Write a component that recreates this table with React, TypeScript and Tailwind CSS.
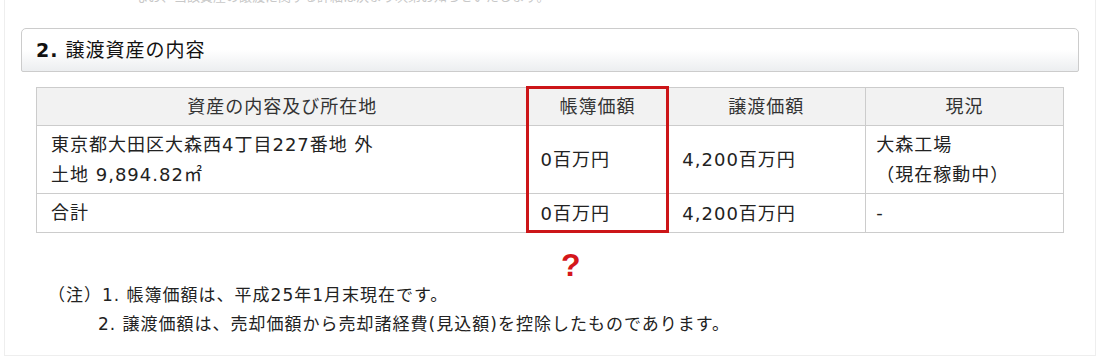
import React from 'react';

const font = { fontFamily: '"DejaVu Sans", "Noto Sans CJK JP", sans-serif' };

const rows = [
  {
    asset: ['東京都大田区大森西4丁目227番地 外', '土地 9,894.82㎡'],
    book: '0百万円',
    transfer: '4,200百万円',
    status: ['大森工場', '（現在稼動中）'],
    h: 'h-[68px]',
  },
  {
    asset: ['合計'],
    book: '0百万円',
    transfer: '4,200百万円',
    status: ['-'],
    h: 'h-[39px]',
  },
];

export default function App() {
  return (
    <div className="w-[1100px] h-[359px] bg-white overflow-hidden text-[#222]" style={font}>
      <div className="ml-[4px] w-[1092px] h-[356px] border-l border-r border-b border-[#eeeeee]">
        <div className="h-[28px] overflow-hidden">
          <div className="-mt-[10px] pl-[130px] text-[13px] leading-[14px] text-[#c8c8c8] whitespace-nowrap">
            なお、当該資産の譲渡に関する詳細は決まり次第お知らせいたします。
          </div>
        </div>

        <div className="ml-[16px] w-[1058px] h-[44px] border border-[#cccccc] rounded-t-[5px] rounded-b-[2px] bg-gradient-to-b from-white from-50% to-[#eceef0] flex items-center pl-[14px]">
          <span className="text-[19px] tracking-[1px] text-[#111]">
            <span className="font-bold">2.</span> 譲渡資産の内容
          </span>
        </div>

        <div className="relative ml-[31px] w-[1028px] mt-[15px]">
          <table className="w-full border-collapse text-[18px] tracking-[1px]">
            <colgroup>
              <col className="w-[492px]" />
              <col className="w-[139px]" />
              <col className="w-[199px]" />
              <col className="w-[198px]" />
            </colgroup>
            <thead>
              <tr className="h-[38px] bg-[#f2f2f2] text-[#333]">
                <th className="border border-[#cccccc] font-normal">資産の内容及び所在地</th>
                <th className="border border-[#cccccc] font-normal">帳簿価額</th>
                <th className="border border-[#cccccc] font-normal">譲渡価額</th>
                <th className="border border-[#cccccc] font-normal">現況</th>
              </tr>
            </thead>
            <tbody>
              {rows.map((r, i) => (
                <tr key={i} className={r.h}>
                  <td className="border border-[#cccccc] pl-[14px] leading-[30px]">
                    {r.asset.map((l) => (
                      <div key={l}>{l}</div>
                    ))}
                  </td>
                  <td className="border border-[#cccccc] pl-[12px]">{r.book}</td>
                  <td className="border border-[#cccccc] pl-[15px]">{r.transfer}</td>
                  <td className="border border-[#cccccc] pl-[10px] leading-[30px]">
                    {r.status.map((l) => (
                      <div key={l}>{l}</div>
                    ))}
                  </td>
                </tr>
              ))}
            </tbody>
          </table>
          <div className="absolute left-[490px] top-[-1px] w-[143px] h-[147px] border-[3px] border-[#cc1518]" />
        </div>

        <div
          className="ml-[556px] mt-[16px] h-[30px] text-[32px] font-bold text-[#d4161b] leading-none"
          style={{ fontFamily: '"Liberation Sans", sans-serif' }}
        >
          ?
        </div>

        <div className="ml-[43px] mt-[2px] text-[17px] tracking-[1px] leading-[29px] text-[#222]">
          <div>（注）1. 帳簿価額は、平成25年1月末現在です。</div>
          <div className="pl-[50px]">2. 譲渡価額は、売却価額から売却諸経費(見込額)を控除したものであります。</div>
        </div>
      </div>
    </div>
  );
}
